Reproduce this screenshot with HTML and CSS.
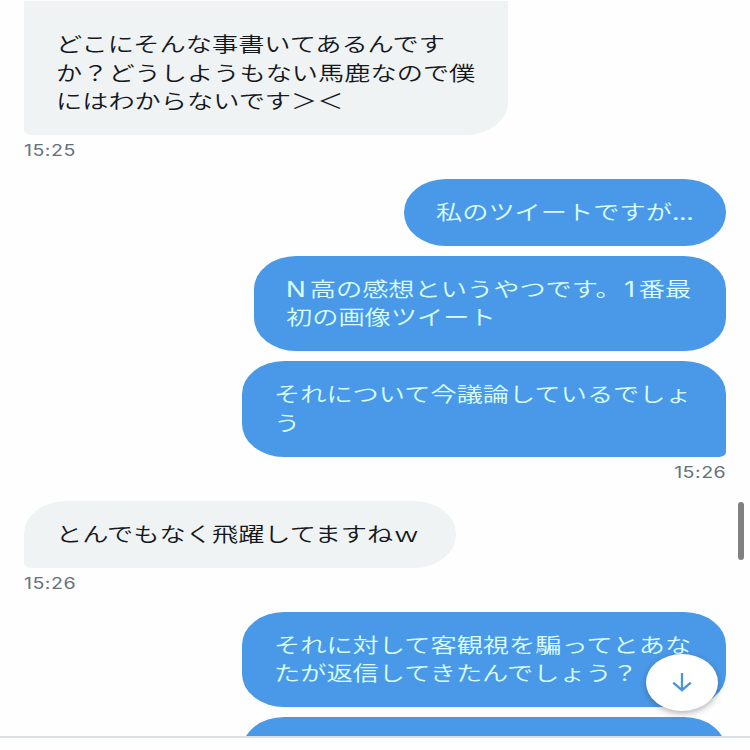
FILE: index.html
```
<!DOCTYPE html>
<html lang="ja">
<head>
  <meta charset="UTF-8">
  <meta name="viewport" content="width=device-width, initial-scale=1.0">
  <title>メッセージ</title>
  <link rel="stylesheet" href="styles.css">
</head>
<body>
  <div class="app">
    <main class="messages">
      <div class="bubble received first last">
        <p>どこにそんな事書いてあるんです<br>か？どうしようもない馬鹿なので僕<br>にはわからないです＞＜</p>
      </div>
      <time>15:25</time>

      <div class="bubble sent short">
        <p>私のツイートですが<span class="dots">...</span></p>
      </div>
      <div class="bubble sent medium">
        <p><span class="latin">N</span>高の感想というやつです。<span class="num">1</span>番最<br>初の画像ツイート</p>
      </div>
      <div class="bubble sent last">
        <p>それについて今議論しているでしょ<br>う</p>
      </div>
      <time class="right">15:26</time>

      <div class="bubble received reply last">
        <p>とんでもなく飛躍してますねｗ</p>
      </div>
      <time>15:26</time>

      <div class="bubble sent">
        <p>それに対して客観視を騙ってとあな<br>たが返信してきたんでしょう？</p>
      </div>
      <div class="bubble sent next"></div>
    </main>

    <footer class="composer"></footer>

    <div class="scrollbar"></div>
    <button class="scroll-down" aria-label="最新へ">
      <svg width="20" height="20" viewBox="0 0 20 20" preserveAspectRatio="none">
        <path d="M10 1v17M1.200 10.600L10 18.200l8.800-7.600"/>
      </svg>
    </button>
  </div>
</body>
</html>
```
FILE: styles.css
```
* {
  box-sizing: border-box;
}
body {
  margin: 0;
  background: #fefefe;
  font-family: "Noto Sans CJK JP", sans-serif;
}
.app {
  position: relative;
  display: flex;
  flex-direction: column;
  width: 750px;
  height: 750px;
  overflow: hidden;
}

/* Messages */
.messages {
  flex: 1;
  min-height: 0;
  overflow: hidden;
  display: flex;
  flex-direction: column;
  align-items: flex-start;
  padding: 1px 24px 0;
}
.bubble {
  flex: none;
  width: 484px;
  height: 95.7px;
  margin-bottom: 9.6px;
  padding: 18px 32px;
  border-radius: 42px / 33px;
}
.bubble p {
  margin: 0;
  width: max-content;
  font-size: 20.75px;
  font-weight: 350;
  line-height: 28.7px;
  white-space: nowrap;
  transform: scaleX(1.263);
  transform-origin: 0 0;
}
.received {
  background: #eff3f4;
  color: #14181c;
}
.sent {
  align-self: flex-end;
  background: #4a99e9;
  color: #d9ffff;
}
.bubble.last {
  margin-bottom: 0;
}
.received.last {
  border-bottom-left-radius: 7px 5px;
}
.sent.last {
  border-bottom-right-radius: 7px 5px;
}
.first {
  height: 134px;
  padding-top: 28px;
  border-top-left-radius: 0;
  border-top-right-radius: 0;
}
.short {
  width: 322px;
  height: 67px;
}
.medium {
  width: 472px;
}
.reply {
  width: 432px;
  height: 67px;
}
.latin, .num, .dots {
  display: inline-block;
  font-family: Inter, sans-serif;
  font-weight: 400;
  line-height: 1;
}
.latin {
  width: 18.8px;
}
.num {
  width: 13.6px;
  padding-left: 2px;
}
.dots {
  letter-spacing: -0.3px;
}

time {
  flex: none;
  height: 44px;
  padding: 6px 0 0;
  font-family: Inter, sans-serif;
  font-size: 15.5px;
  font-weight: 400;
  line-height: 20px;
  letter-spacing: 0.4px;
  color: #65727d;
  transform: scaleX(1.263);
  transform-origin: 0 0;
}
time.right {
  align-self: flex-end;
  transform-origin: 100% 0;
}

/* Bottom bar */
.composer {
  flex: none;
  height: 14px;
  border-top: 2px solid #dbe0e4;
  background: #fefefe;
}

.scrollbar {
  position: absolute;
  top: 502px;
  left: 738px;
  width: 6px;
  height: 58px;
  border-radius: 3px;
  background: #808080;
}
.scroll-down {
  position: absolute;
  top: 654px;
  left: 646px;
  width: 72px;
  height: 57px;
  padding: 0 0 2px;
  display: flex;
  align-items: center;
  justify-content: center;
  border: 0;
  border-radius: 50%;
  background: #fff;
  box-shadow: 0 2px 6px rgba(50, 50, 60, 0.4);
}
.scroll-down svg {
  fill: none;
  stroke: #4a94dc;
  stroke-width: 2.3;
}
```
